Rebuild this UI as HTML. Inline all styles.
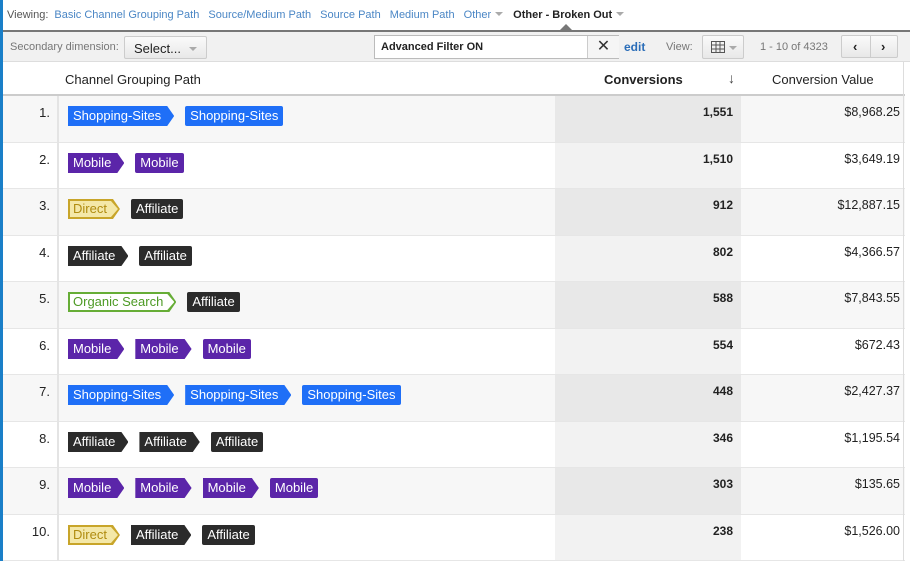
<!DOCTYPE html>
<html><head><meta charset="utf-8"><style>
*{box-sizing:border-box;margin:0;padding:0}
body{width:910px;height:561px;overflow:hidden;background:#fff;font-family:"Liberation Sans",Arial,sans-serif;position:relative}
.lb{position:absolute;left:0;top:0;width:3px;height:561px;background:#1a7fc8;z-index:5}
.view{position:absolute;left:7px;top:9px;font-size:11px;color:#555;white-space:nowrap}
.view a{color:#4a86c5;margin-left:6px}
.view b{color:#222;margin-left:10px}
.car{display:inline-block;width:0;height:0;border-left:4px solid transparent;border-right:4px solid transparent;border-top:4px solid #aaa;margin-left:4px;vertical-align:2px}
.bar{position:absolute;left:3px;top:30px;width:907px;height:32px;background:#f1f1f1;border-top:2px solid #777;border-bottom:1px solid #ddd}
.bar .t{position:absolute;font-size:11px;color:#777;top:9px}
.btn{position:absolute;border:1px solid #ccc;background:linear-gradient(#fafafa,#e8e8e8);border-radius:2px}
.hdr{position:absolute;left:3px;top:62px;width:902px;height:34px;background:#fff;border-bottom:2px solid #ccc;font-size:13px;color:#222}
.row{position:absolute;left:3px;width:902px;border-bottom:1px solid #e6e6e6}
.row .n{position:absolute;left:0;width:47px;text-align:right;top:9px;font-size:13px;color:#222}
.row .c{position:absolute;left:552px;width:186px;top:0;bottom:0;text-align:right;padding-right:8px;padding-top:9px;font-size:12px;font-weight:bold;color:#222}
.row .v{position:absolute;left:738px;width:159px;text-align:right;top:9px;font-size:12.5px;color:#222}
.row .tags{position:absolute;left:65px;top:10px;white-space:nowrap;font-size:13px}
.vl{position:absolute;left:57px;top:96px;width:2px;height:465px;background:#e4e4e4}
.rl{position:absolute;left:903px;top:62px;width:1px;height:499px;background:#ddd}
.tg{display:inline-block;height:20px;line-height:20px;padding:0 5px;color:#fff;border-radius:2px;margin-right:8px;vertical-align:top}
.ar{display:inline-block;position:relative;height:20px;padding:0 13px 0 5px;line-height:20px;color:#fff;margin-right:11px;vertical-align:top;clip-path:polygon(0 0,calc(100% - 7px) 0,100% 50%,calc(100% - 7px) 100%,0 100%)}
.B{background:#1f6ff7}.P{background:#5b25a9}.K{background:#2b2b2b}
.D{background:#c8a52a;color:#b08c10}
.D i,.G i{position:absolute;left:2px;top:2px;right:2px;bottom:2px;clip-path:polygon(0 0,calc(100% - 7px) 0,100% 50%,calc(100% - 7px) 100%,0 100%);z-index:0}
.D i{background:#f4e8a8}.G{background:#66ad36;color:#4d9a25}.G i{background:#fff}
.ar span{position:relative;z-index:1;font-style:normal}
</style></head><body>
<div class="lb"></div>
<div class="view">Viewing:<a>Basic Channel Grouping Path</a> <a>Source/Medium Path</a> <a>Source Path</a> <a>Medium Path</a> <a>Other</a><span class="car"></span><b>Other - Broken Out</b><span class="car"></span></div>
<div style="position:absolute;left:560px;top:24px;width:0;height:0;border-left:6px solid transparent;border-right:6px solid transparent;border-bottom:6px solid #777"></div>
<div class="bar">
 <span class="t" style="left:7px">Secondary dimension:</span>
 <div class="btn" style="left:121px;top:4px;width:83px;height:23px;font-size:13px;color:#222;padding:4px 0 0 9px">Select...<span class="car" style="margin-left:8px"></span></div>
 <div class="btn" style="left:371px;top:3px;width:245px;height:24px;background:#fff;border-color:#bbb;border-radius:0"><span style="position:absolute;left:6px;top:5px;font-size:11px;font-weight:bold;color:#222">Advanced Filter ON</span><span style="position:absolute;left:212px;top:0;width:32px;height:22px;border-left:1px solid #ccc;background:#f5f5f5;text-align:center;font-size:16px;line-height:22px;color:#333">✕</span></div>
 <span class="t" style="left:621px;top:8px;color:#2a6db8;font-weight:bold;font-size:12px">edit</span>
 <span class="t" style="left:663px">View:</span>
 <div class="btn" style="left:699px;top:3px;width:42px;height:24px"><svg width="14" height="12" style="position:absolute;left:8px;top:5px" fill="none" stroke="#555"><rect x="0.5" y="0.5" width="13" height="11"/><path d="M5 0v12M9 0v12M0 4h14M0 8h14"/></svg><span class="car" style="position:absolute;left:26px;top:10px;margin:0"></span></div>
 <span class="t" style="left:757px">1 - 10 of 4323</span>
 <div class="btn" style="left:838px;top:3px;width:57px;height:23px;font-size:13px;font-weight:bold;color:#222"><span style="position:absolute;left:11px;top:3px">‹</span><span style="position:absolute;left:28px;top:0;width:1px;height:21px;background:#ccc"></span><span style="position:absolute;left:39px;top:3px">›</span></div>
</div>
<div class="hdr"><span style="position:absolute;left:62px;top:10px">Channel Grouping Path</span><span style="position:absolute;left:601px;top:10px;font-weight:bold">Conversions</span><span style="position:absolute;left:725px;top:8px;font-size:14px;color:#444">↓</span><span style="position:absolute;left:769px;top:10px">Conversion Value</span></div>

<div class="row" style="top:96px;height:47px;background:#f7f7f7"><span class="n">1.</span><div class="tags"><span class="ar B">Shopping-Sites</span><span class="tg B">Shopping-Sites</span></div><span class="c" style="background:#e8e8e8">1,551</span><span class="v">$8,968.25</span></div>
<div class="row" style="top:143px;height:46px;background:#fff"><span class="n">2.</span><div class="tags"><span class="ar P">Mobile</span><span class="tg P">Mobile</span></div><span class="c" style="background:#f2f2f2">1,510</span><span class="v">$3,649.19</span></div>
<div class="row" style="top:189px;height:47px;background:#f7f7f7"><span class="n">3.</span><div class="tags"><span class="ar D"><i></i><span>Direct</span></span><span class="tg K">Affiliate</span></div><span class="c" style="background:#e8e8e8">912</span><span class="v">$12,887.15</span></div>
<div class="row" style="top:236px;height:46px;background:#fff"><span class="n">4.</span><div class="tags"><span class="ar K">Affiliate</span><span class="tg K">Affiliate</span></div><span class="c" style="background:#f2f2f2">802</span><span class="v">$4,366.57</span></div>
<div class="row" style="top:282px;height:47px;background:#f7f7f7"><span class="n">5.</span><div class="tags"><span class="ar G"><i></i><span>Organic Search</span></span><span class="tg K">Affiliate</span></div><span class="c" style="background:#e8e8e8">588</span><span class="v">$7,843.55</span></div>
<div class="row" style="top:329px;height:46px;background:#fff"><span class="n">6.</span><div class="tags"><span class="ar P">Mobile</span><span class="ar P">Mobile</span><span class="tg P">Mobile</span></div><span class="c" style="background:#f2f2f2">554</span><span class="v">$672.43</span></div>
<div class="row" style="top:375px;height:47px;background:#f7f7f7"><span class="n">7.</span><div class="tags"><span class="ar B">Shopping-Sites</span><span class="ar B">Shopping-Sites</span><span class="tg B">Shopping-Sites</span></div><span class="c" style="background:#e8e8e8">448</span><span class="v">$2,427.37</span></div>
<div class="row" style="top:422px;height:46px;background:#fff"><span class="n">8.</span><div class="tags"><span class="ar K">Affiliate</span><span class="ar K">Affiliate</span><span class="tg K">Affiliate</span></div><span class="c" style="background:#f2f2f2">346</span><span class="v">$1,195.54</span></div>
<div class="row" style="top:468px;height:47px;background:#f7f7f7"><span class="n">9.</span><div class="tags"><span class="ar P">Mobile</span><span class="ar P">Mobile</span><span class="ar P">Mobile</span><span class="tg P">Mobile</span></div><span class="c" style="background:#e8e8e8">303</span><span class="v">$135.65</span></div>
<div class="row" style="top:515px;height:46px;background:#fff"><span class="n">10.</span><div class="tags"><span class="ar D"><i></i><span>Direct</span></span><span class="ar K">Affiliate</span><span class="tg K">Affiliate</span></div><span class="c" style="background:#f2f2f2">238</span><span class="v">$1,526.00</span></div>
<div class="vl"></div><div class="rl"></div>
</body></html>
